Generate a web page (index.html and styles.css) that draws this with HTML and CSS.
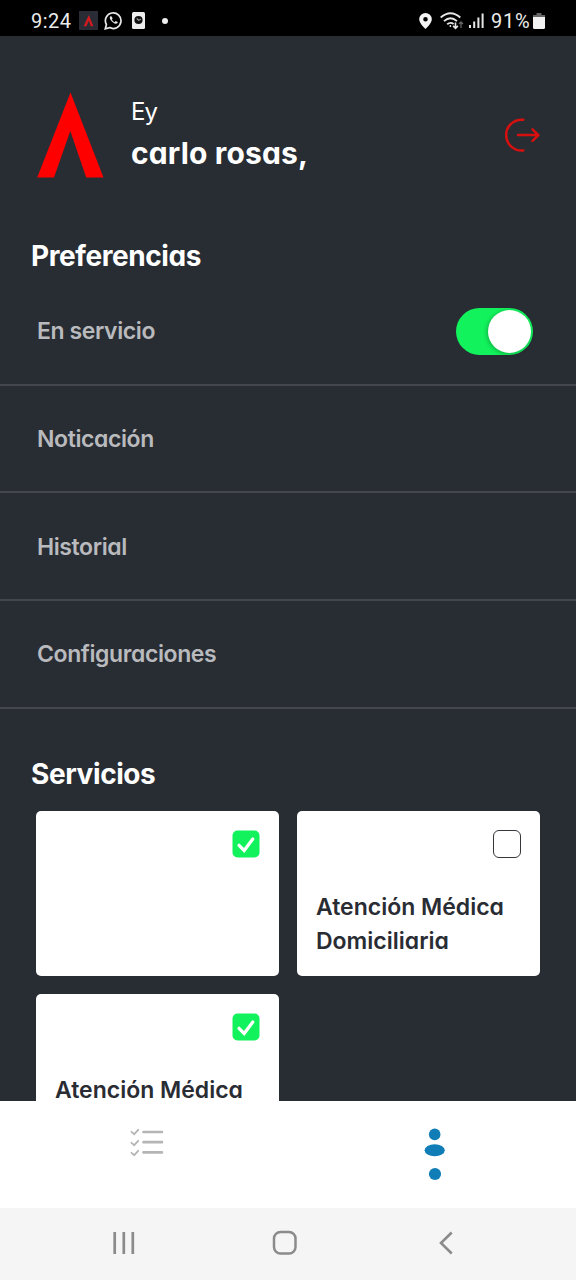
FILE: index.html
```html
<!DOCTYPE html>
<html lang="es">
<head>
<meta charset="utf-8">
<title>Preferencias</title>
<link rel="stylesheet" href="styles.css">
</head>
<body>
<div class="screen">
  <header class="status">
    <span class="clock">9:24</span>
    <svg class="app-icon" width="19" height="19" viewBox="0 0 19 19"><rect width="19" height="19" fill="#292c35"/><path d="M4.7 15.2 9.8 4l4.6 11.2h-2.6l-2-5.4-2.4 5.4z" fill="#d31a1e"/></svg>
    <svg class="chat-icon" width="19" height="19" viewBox="0 0 19 19" fill="none" stroke="#e8e8e8"><path d="M1.3 17.7 2.4 13.5A7.8 7.8 0 1 1 5.6 16.6z" stroke-width="1.7"/><path d="M6.4 5.3c-1 .8-.8 2.200.3 3.800 1.400 2 3.400 3.700 5.200 3.700 1.200 0 1.900-.7 1.800-1.700l-2.100-1-1 1.100c-1.300-.5-2.200-1.500-2.800-2.600l.8-1-.9-2.200z" fill="#e8e8e8" stroke="none"/></svg>
    <svg class="disk-icon" width="13" height="17" viewBox="0 0 13 17"><rect width="13" height="17" rx="1.5" fill="#eee"/><circle cx="6.5" cy="8" r="4.100" fill="#111"/><path d="m4.700 6.500 2 1.700 2.200-.9" stroke="#999" stroke-width="1.200" fill="none"/></svg>
    <span class="dot"></span>
    <svg class="pin" width="13" height="16" viewBox="0 0 13 16"><path fill="#f5f5f5" fill-rule="evenodd" d="M6.500 0A6.300 6.300 0 0 0 .2 6.200C.2 10.500 6.500 16 6.500 16s6.300-5.500 6.300-9.800A6.300 6.300 0 0 0 6.500 0zm0 3.900a2.300 2.300 0 1 1 0 4.600 2.300 2.300 0 0 1 0-4.600z"/></svg>
    <svg class="wifi" width="24" height="18" viewBox="0 0 24 18" fill="none" stroke="#e6e6e6" stroke-width="1.800"><path d="M.7 5.500q9.800-8.600 19.600 0M4 9.100q6.500-5.600 13 0M7.200 12.300q3.300-2.800 6.400-.3"/><circle cx="10.400" cy="14" r=".9" fill="#eee" stroke="none"/><path d="M15.500 10.500v5.700m-2.400-2.300 2.400 2.400 2.400-2.400" stroke-width="1.600"/><path d="M21 16v-6m-2 2 2-2 2 2" stroke="#666" stroke-width="1.300"/></svg>
    <svg class="signal" width="15" height="15" viewBox="0 0 15 15" fill="#e6e6e6"><path d="M0 12h2v3H0zM4.200 8.500h2V15h-2zM8.400 4.500h2V15h-2zM12.600.5h2V15h-2z"/></svg>
    <span class="percent">91%</span>
    <svg class="battery" width="12" height="16" viewBox="0 0 12 16"><path d="M3.500 0h5v2H12v3H0V2h3.500z" fill="#666"/><path d="M0 4h12v10.500Q12 16 10.500 16h-9Q0 16 0 14.500z" fill="#f2f2f2"/></svg>
  </header>

  <main class="content">
    <section class="profile">
      <svg class="logo" width="68" height="86" viewBox="0 0 68 86"><path d="M34.500.5 67.500 85.500H50.200L34.300 39 18 85.500H1.200z" fill="#fe0000"/></svg>
      <div class="names"><span class="greeting">Ey</span><span class="user">carlo rosas,</span></div>
      <svg class="logout" width="35" height="34" viewBox="0 0 35 34" fill="none" stroke="#d5100f" stroke-width="2.500" stroke-linecap="round" stroke-linejoin="round"><path d="M18.300 1.800a15.400 15.400 0 1 0 0 30.600M13 17.100h20.300M27.500 11.300l5.900 5.800-5.900 5.800"/></svg>
    </section>
    <h2 class="heading">Preferencias</h2>
    <ul class="options">
      <li class="option"><span>En servicio</span><span class="toggle"><span class="knob"></span></span></li>
      <li class="option"><span>Noticación</span></li>
      <li class="option"><span>Historial</span></li>
      <li class="option"><span>Configuraciones</span></li>
    </ul>
    <h2 class="heading services">Servicios</h2>
    <div class="cards">
      <article class="card"><svg class="check" width="28" height="28" viewBox="0 0 28 28"><rect x=".5" y=".5" width="27" height="27" rx="5" fill="#12f25c"/><path d="m7 15.300 5.200 5.200L20.800 9" fill="none" stroke="#fff" stroke-width="3.200" stroke-linecap="round"/></svg></article>
      <article class="card"><span class="box"></span><p class="label">Atención Médica<br>Domiciliaria</p></article>
      <article class="card"><svg class="check" width="28" height="28" viewBox="0 0 28 28"><rect x=".5" y=".5" width="27" height="27" rx="5" fill="#12f25c"/><path d="m7 15.300 5.200 5.200L20.800 9" fill="none" stroke="#fff" stroke-width="3.200" stroke-linecap="round"/></svg><p class="label">Atención Médica</p></article>
    </div>
  </main>

  <nav class="tabs">
    <svg class="tasks" width="34" height="28" viewBox="0 0 34 28" fill="none" stroke="#b5b5b5" stroke-linecap="round"><path d="M13.500 4h18.400M13.500 14.200h18.400M13.500 24.400h18.400" stroke-width="2.700"/><path d="m1.500 3.800 2.700 2.400 4-4.400m-6.700 13 2.700 2.400 4-4.400m-6.700 12 2.700 2.400 4-4.400" stroke-width="1.800"/></svg>
    <svg class="person" width="22" height="54" viewBox="0 0 22 54" fill="#107db7"><circle cx="10.700" cy="6.400" r="5.800"/><ellipse cx="10.700" cy="22.200" rx="10.100" ry="6"/><circle cx="11" cy="46" r="6.100"/></svg>
  </nav>
  <footer class="system">
    <svg class="recents" width="22" height="24" viewBox="0 0 22 24" stroke="#8b8b8b" stroke-width="2.700"><path d="M1.700 1v22M10.800 1v22M19.800 1v22"/></svg>
    <svg class="home" width="26" height="26" viewBox="0 0 26 26" fill="none" stroke="#8b8b8b" stroke-width="2.500"><rect x="2" y="2" width="21.500" height="21.500" rx="6.500"/></svg>
    <svg class="back" width="14" height="24" viewBox="0 0 14 24" fill="none" stroke="#8b8b8b" stroke-width="2.600"><path d="M12.700 1.500 2 12l10.700 10.500"/></svg>
  </footer>
</div>
</body>
</html>
```
FILE: styles.css
```css
* { box-sizing: border-box; }
body { margin: 0; font-family: Inter, "Liberation Sans", sans-serif; font-feature-settings: "cv11" 1; }
svg { display: block; flex: none; }
.screen { width: 576px; height: 1280px; display: flex; flex-direction: column; overflow: hidden; background: #282c33; }
.status { height: 36px; flex: none; display: flex; align-items: center; padding: 5px 31px 0 31px; background: #000; color: #ececec; font-family: Roboto, sans-serif; font-size: 20px; }
.clock { width: 41px; letter-spacing: .5px; }
.app-icon { margin-left: 7px; }
.chat-icon { margin-left: 6px; }
.disk-icon { margin-left: 9px; }
.dot { width: 6px; height: 6px; margin-left: 17px; border-radius: 50%; background: #eee; }
.pin { margin-left: auto; }
.wifi { margin-left: 8px; }
.signal { margin-left: 5px; }
.percent { width: 40px; margin-left: 7px; white-space: nowrap; letter-spacing: .7px; }
.battery { margin-left: 2px; }
.content { flex: 1; min-height: 0; display: flex; flex-direction: column; color: #fff; }
.profile { height: 200px; flex: none; display: flex; align-items: flex-start; padding: 56px 36px 0; }
.names { display: flex; flex-direction: column; margin-left: 27px; white-space: nowrap; }
.greeting { height: 42px; line-height: 40px; font-size: 24px; font-weight: 400; letter-spacing: -1px; }
.user { height: 38px; line-height: 38px; font-size: 30px; font-weight: 700; letter-spacing: .15px; }
.logout { margin: 26px 0 0 auto; }
.heading { flex: none; margin: 0; padding-left: 31px; height: 42px; line-height: 40px; font-size: 28px; font-weight: 700; letter-spacing: -.42px; }
.options { list-style: none; margin: 0; padding: 0; flex: none; }
.option { height: 107.700px; display: flex; align-items: center; justify-content: space-between; padding: 1px 43px 0 37px; border-bottom: 2px solid #44474e; color: #b9babd; font-size: 23px; font-weight: 600; letter-spacing: -.4px; }
.toggle { width: 77px; height: 47px; display: flex; justify-content: flex-end; align-items: center; padding-right: 2px; border-radius: 24px; background: #12f25c; }
.knob { width: 43px; height: 43px; border-radius: 50%; background: #fff; box-shadow: -1px 1px 4px rgba(0, 0, 0, .28); }
.services { margin-top: 45px; height: 57px; }
.cards { flex: 1; min-height: 0; overflow: hidden; display: grid; grid-template-columns: 243px 243px; grid-auto-rows: 165px; gap: 18px; padding-left: 36px; }
.card { display: flex; flex-direction: column; background: #fff; border-radius: 5px; padding: 19px; color: #292c33; }
.check, .box { align-self: flex-end; }
.box { width: 28px; height: 28px; flex: none; border: 1.500px solid #35373b; border-radius: 6px; }
.label { margin: 32px 0 0; line-height: 34px; font-size: 23px; font-weight: 600; white-space: nowrap; }
.tabs { height: 107px; flex: none; display: flex; justify-content: space-between; padding: 27px 130px 0 130px; background: #fff; }
.system { height: 72px; flex: none; display: flex; align-items: center; padding: 0 0 2px 113px; background: #f5f5f5; }
.home { margin-left: 137px; }
.back { margin-left: 141px; }
```
